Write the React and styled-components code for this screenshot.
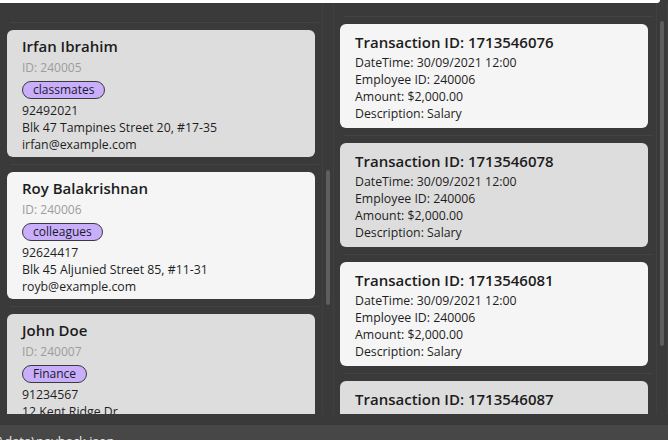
import React from "react";
import styled, { createGlobalStyle } from "styled-components";

const Global = createGlobalStyle`
  html, body { margin: 0; padding: 0; background: #3a3a3a; }
  * { box-sizing: border-box; }
`;

const FONT = `"Open Sans", "Noto Sans", "Liberation Sans", sans-serif`;

const Window = styled.div`
  width: 668px;
  height: 440px;
  background: #3a3a3a;
  display: flex;
  flex-direction: column;
  overflow: hidden;
  font-family: ${FONT};
`;

const CommandBox = styled.div`
  height: 3px;
  margin-right: 8px;
  background: #ffffff;
  border-bottom-right-radius: 4px;
  flex: none;
`;

const Panes = styled.div`
  flex: none;
  height: 411px;
  display: flex;
  overflow: hidden;
`;

const Pane = styled.div`
  width: ${(p) => p.$width}px;
  display: flex;
  flex: none;
  overflow: hidden;
`;

const List = styled.div`
  flex: 1;
  padding: ${(p) => p.$top}px 0 0 ${(p) => p.$left}px;
  overflow: hidden;
`;

const Cell = styled.div`
  margin: 0 3px;
  border-top: 1px solid #434343;
  padding: 7px 0 7px;
`;

const Card = styled.div`
  margin: 0 -3px;
  width: 308px;
  height: ${(p) => p.$h}px;
  background: ${(p) => (p.$odd ? "#dddddd" : "#f5f5f5")};
  border-radius: 6px;
  padding: ${(p) => p.$pad};
  overflow: hidden;
  color: #1e1e1e;
`;

const Name = styled.div`
  font-size: 15px;
  font-weight: 600;
  line-height: 24px;
  color: #1c1c1c;
  white-space: nowrap;
`;

const Muted = styled.div`
  font-size: 12px;
  line-height: 19px;
  color: #9c9c9c;
`;

const Tag = styled.span`
  display: inline-flex;
  align-items: center;
  height: 18px;
  margin: 3px 0 3px;
  padding: 0 10px;
  background: #c9aefc;
  border: 1px solid #3a3a3a;
  border-radius: 9px;
  font-size: 12px;
  color: #1a1a2a;
`;

const Line = styled.div`
  font-size: 12.3px;
  line-height: 17px;
  white-space: nowrap;
  color: #1e1e1e;
`;

const Title = styled.div`
  font-size: 15px;
  font-weight: 600;
  line-height: 24px;
  color: #1c1c1c;
  white-space: nowrap;
`;

const Track = styled.div`
  flex: none;
  width: 12px;
  border-left: 1px solid #404040;
  border-right: 1px solid #404040;
  display: flex;
  flex-direction: column;
  align-items: center;
`;

const Thumb = styled.div`
  width: 4px;
  border-radius: 2px;
  background: #5e5e5e;
  margin-top: ${(p) => p.$top}px;
  height: ${(p) => p.$h}px;
`;

const Gap = styled.div`
  flex: none;
  height: 11px;
`;

const StatusBar = styled.div`
  flex: 1;
  background: #474747;
  padding: 7px 0 0 0;
  overflow: hidden;
`;

const StatusText = styled.div`
  font-size: 13px;
  line-height: 18px;
  color: #e6e6e6;
  margin-left: -4px;
  white-space: nowrap;
`;

const persons = [
  { name: "Irfan Ibrahim", id: "240005", tag: "classmates", phone: "92492021", addr: "Blk 47 Tampines Street 20, #17-35", email: "irfan@example.com" },
  { name: "Roy Balakrishnan", id: "240006", tag: "colleagues", phone: "92624417", addr: "Blk 45 Aljunied Street 85, #11-31", email: "royb@example.com" },
  { name: "John Doe", id: "240007", tag: "Finance", phone: "91234567", addr: "12 Kent Ridge Dr", email: "john@example.com" },
];

const txns = ["1713546076", "1713546078", "1713546081", "1713546087"];

export default function App() {
  return (
    <>
      <Global />
      <Window>
        <CommandBox />
        <Panes>
          <Pane $width={334}>
            <List $top={19} $left={7}>
              {persons.map((p, i) => (
                <Cell key={p.id}>
                  <Card $h={127} $odd={i % 2 === 0} $pad="4px 15px">
                    <Name>{p.name}</Name>
                    <Muted>ID: {p.id}</Muted>
                    <Tag>{p.tag}</Tag>
                    <Line>{p.phone}</Line>
                    <Line>{p.addr}</Line>
                    <Line>{p.email}</Line>
                  </Card>
                </Cell>
              ))}
            </List>
            <Track>
              <Thumb $top={167} $h={135} />
            </Track>
          </Pane>
          <Pane $width={334}>
            <List $top={13} $left={6}>
              {txns.map((t, i) => (
                <Cell key={t}>
                  <Card $h={104} $odd={i % 2 === 1} $pad="6px 15px 5px">
                    <Title>Transaction ID: {t}</Title>
                    <Line>DateTime: 30/09/2021 12:00</Line>
                    <Line>Employee ID: 240006</Line>
                    <Line>Amount: $2,000.00</Line>
                    <Line>Description: Salary</Line>
                  </Card>
                </Cell>
              ))}
            </List>
            <Track>
              <Thumb $top={18} $h={325} />
            </Track>
          </Pane>
        </Panes>
        <Gap />
        <StatusBar>
          <StatusText>.\data\payback.json</StatusText>
        </StatusBar>
      </Window>
    </>
  );
}
